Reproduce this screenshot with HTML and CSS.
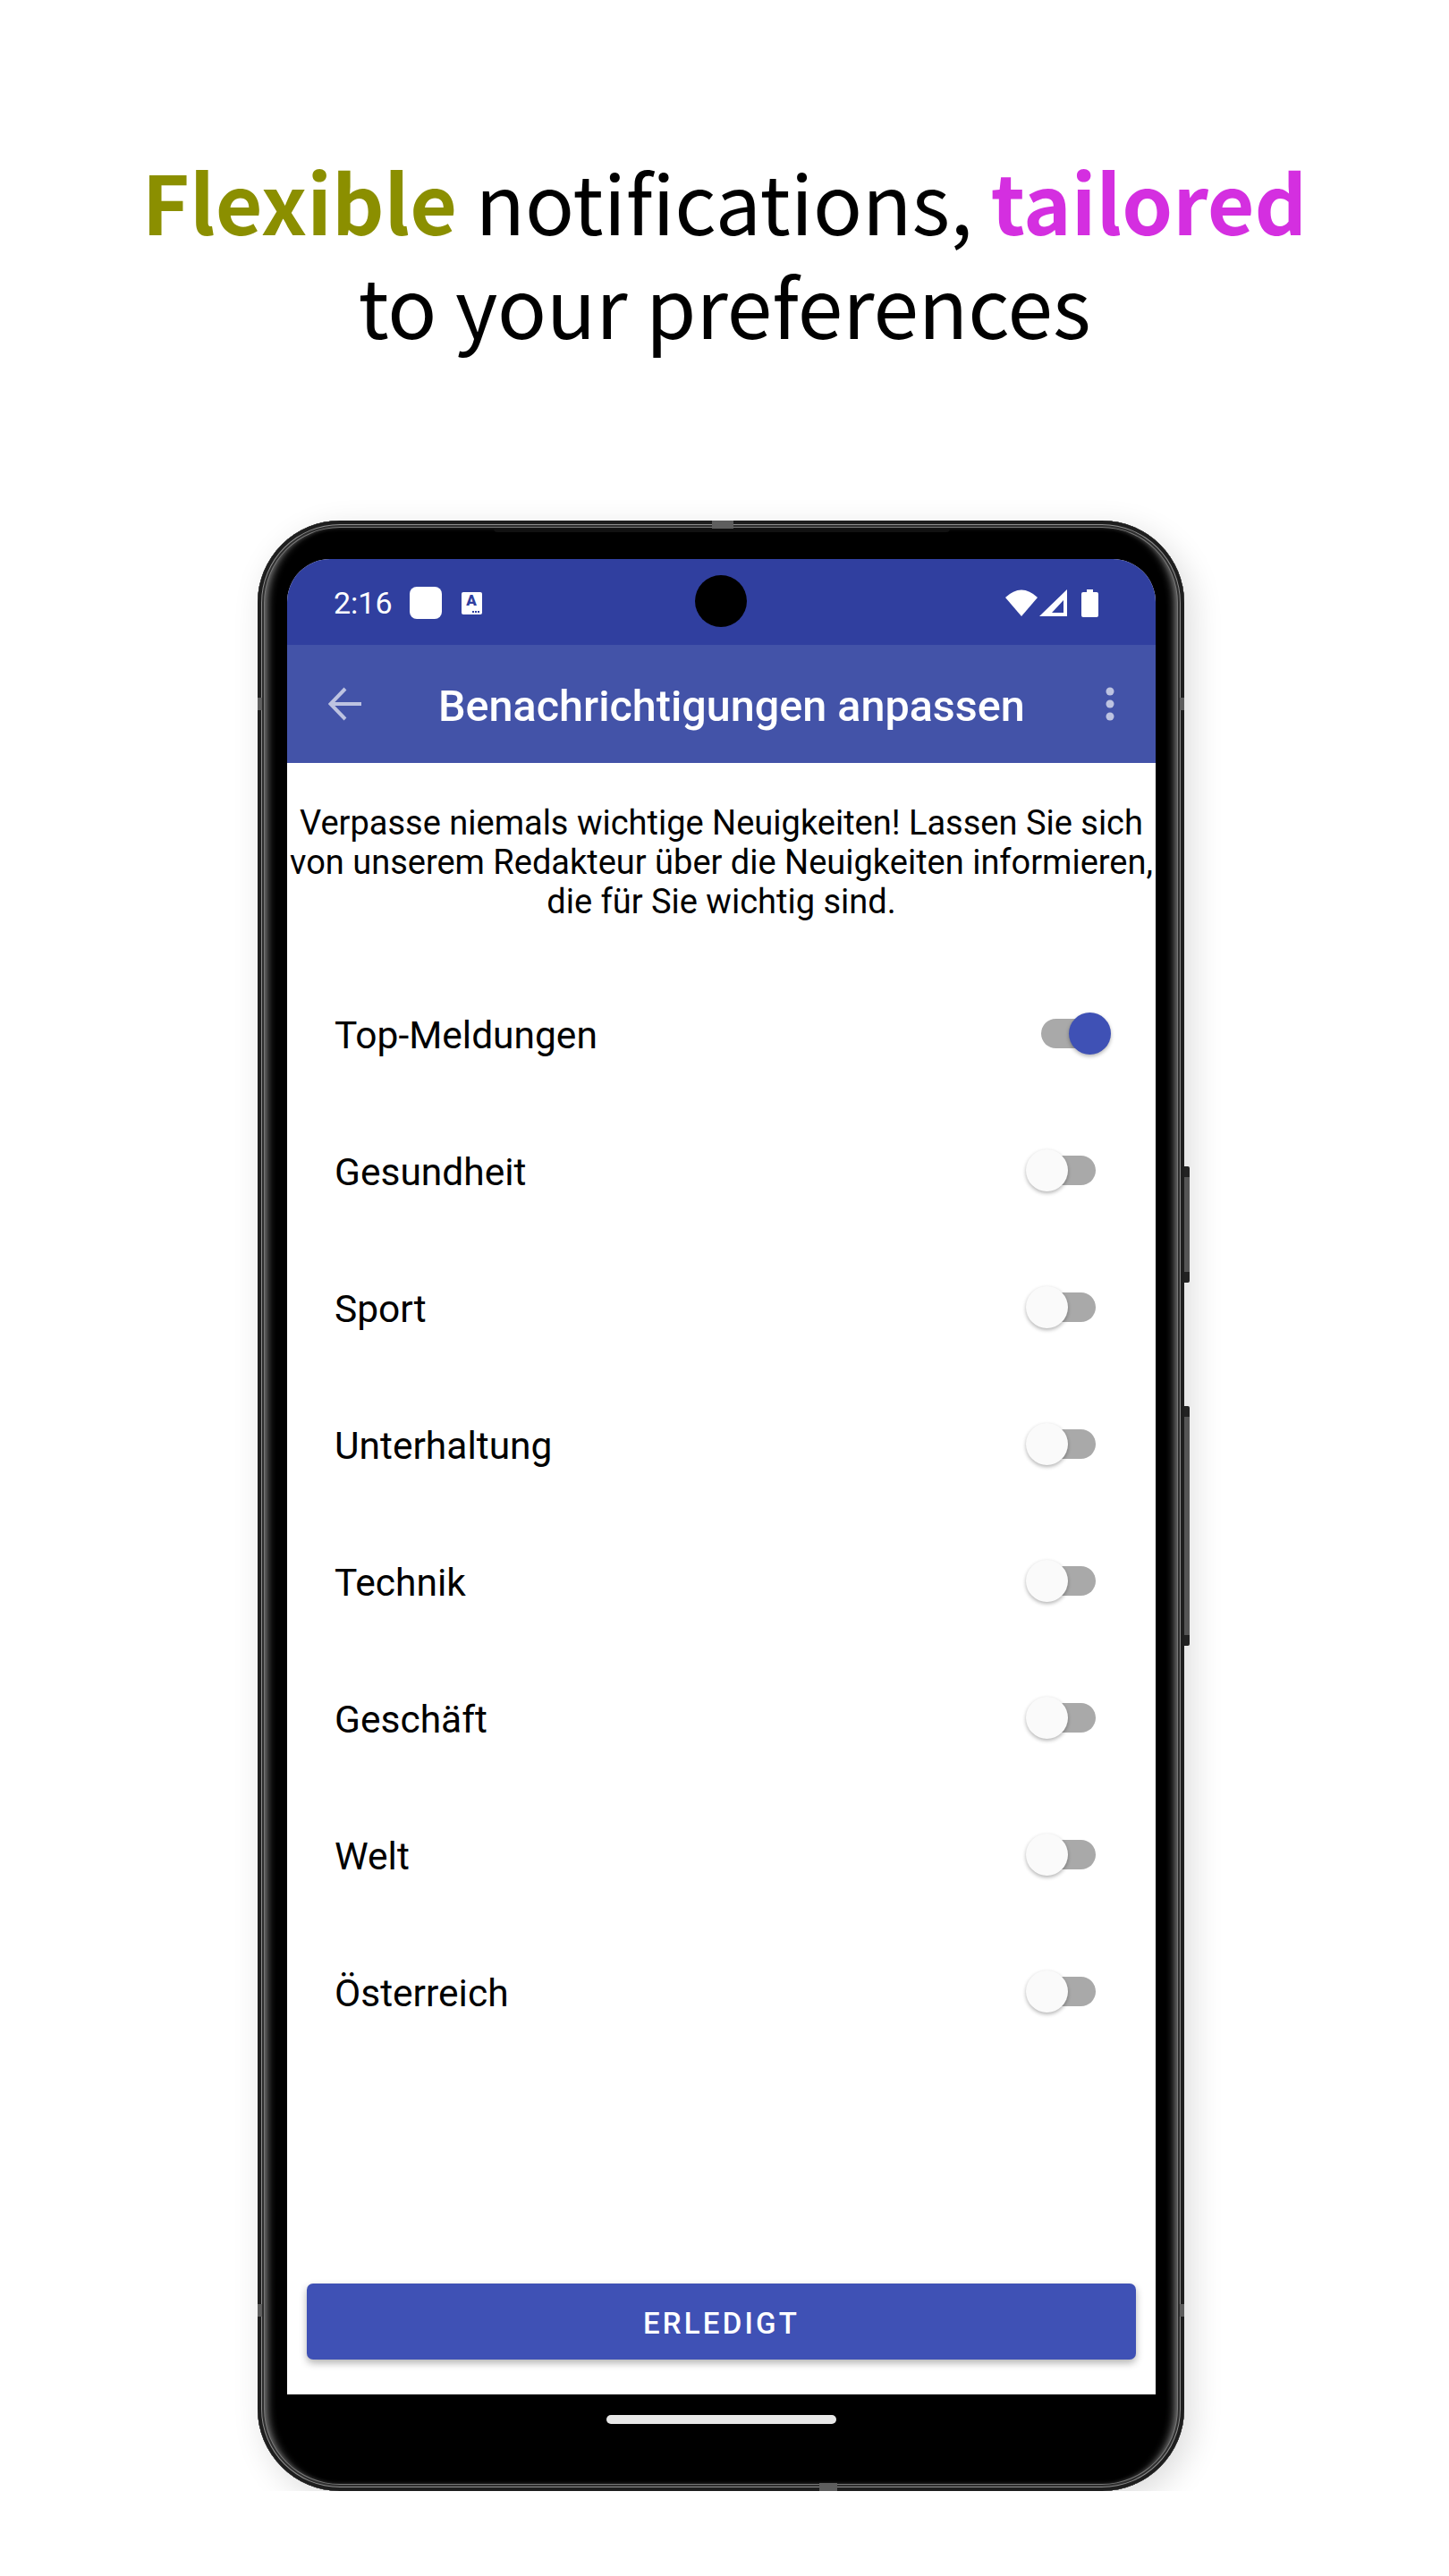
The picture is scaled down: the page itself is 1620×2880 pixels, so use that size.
FILE: index.html
```html
<!DOCTYPE html>
<html lang="en">
<head>
    <meta charset="UTF-8">
    <title>Benachrichtigungen</title>
    <link rel="stylesheet" href="styles.css">
</head>
<body>
    <h1 class="headline">
        <strong class="olive">Flexible</strong> notifications, <strong class="pink">tailored</strong><br>
        to your preferences
    </h1>

    <div class="phone">
        <span class="side-key volume"></span>
        <span class="side-key power"></span>
        <span class="tick tick-top"></span>
        <span class="tick tick-bottom"></span>
        <span class="tick tick-left upper"></span>
        <span class="tick tick-left lower"></span>
        <span class="tick tick-right upper"></span>
        <span class="tick tick-right lower"></span>
        <span class="earpiece"></span>
        <span class="camera"></span>

        <div class="screen">
            <div class="status-bar">
                <span class="clock">2:16</span>
                <span class="app-square"></span>
                <span class="app-badge">A</span>
                <span class="status-icons">
                    <svg width="36" height="30" viewBox="0 0 36 30"><path d="M0 9Q18-8 36 9L18 30Z" fill="#fff"/></svg>
                    <svg width="31" height="30" viewBox="0 0 31 30"><path fill-rule="evenodd" d="M31 0V30H0ZM27 12 14 26H27Z" fill="#fff"/></svg>
                    <svg class="battery" width="19" height="31" viewBox="0 0 19 31"><path d="M6 0H13V3H17Q19 3 19 5V29Q19 31 17 31H2Q0 31 0 29V5Q0 3 2 3H6Z" fill="#fff"/></svg>
                </span>
            </div>

            <div class="app-bar">
                <svg class="back" width="38" height="38" viewBox="0 0 38 38"><path d="M37 19H3M19 2 2.500 19 19 36" fill="none" stroke="#fff" stroke-opacity=".65" stroke-width="4"/></svg>
                <div class="app-title">Benachrichtigungen anpassen</div>
                <svg class="more" width="10" height="38" viewBox="0 0 10 38"><g fill="#fff" fill-opacity=".65"><circle cx="5" cy="5" r="4.500"/><circle cx="5" cy="19" r="4.500"/><circle cx="5" cy="33" r="4.500"/></g></svg>
            </div>

            <div class="content">
                <p class="intro">Verpasse niemals wichtige Neuigkeiten! Lassen Sie sich<br>von unserem Redakteur über die Neuigkeiten informieren,<br>die für Sie wichtig sind.</p>

                <div class="topics">
                    <div class="topic"><span class="topic-name">Top-Meldungen</span><span class="switch on"></span></div>
                    <div class="topic"><span class="topic-name">Gesundheit</span><span class="switch"></span></div>
                    <div class="topic"><span class="topic-name">Sport</span><span class="switch"></span></div>
                    <div class="topic"><span class="topic-name">Unterhaltung</span><span class="switch"></span></div>
                    <div class="topic"><span class="topic-name">Technik</span><span class="switch"></span></div>
                    <div class="topic"><span class="topic-name">Geschäft</span><span class="switch"></span></div>
                    <div class="topic"><span class="topic-name">Welt</span><span class="switch"></span></div>
                    <div class="topic"><span class="topic-name">Österreich</span><span class="switch"></span></div>
                </div>

                <button class="done" type="button">ERLEDIGT</button>
            </div>
        </div>

        <div class="nav-area">
            <span class="home-bar"></span>
        </div>
    </div>
</body>
</html>
```

FILE: styles.css
```css
body {
    margin: 0;
    background-color: #fff;
    font-family: Roboto, sans-serif;
    color: #000;
}
.headline {
    margin: 0;
    padding-top: 165px;
    text-align: center;
    font-family: "Noto Sans CJK SC", "Noto Sans", sans-serif;
    font-size: 91px;
    font-weight: 400;
    line-height: 116px;
}
.headline strong {
    font-weight: 700;
}
.olive {
    color: #8b8f00;
}
.pink {
    color: #d42fe0;
}
.phone {
    position: relative;
    width: 1036px;
    height: 2203px;
    box-sizing: border-box;
    margin: 185px 0 0 288px;
    padding: 43px 32px 0 33px;
    display: flex;
    flex-direction: column;
    background-color: #000;
    border-radius: 92px;
    box-shadow:
        inset 0 0 0 4px #1e1e1e,
        inset 0 0 0 5px #8c8c8c,
        inset 0 0 0 7px #2e2e2e,
        inset 0 0 0 8px #777,
        inset 14px 0 10px -3px #777,
        inset -14px 0 10px -3px #777,
        inset 0 0 5px 8px #333,
        8px 10px 36px rgba(0, 0, 0, .14);
}
.side-key {
    position: absolute;
    right: -6px;
    width: 6px;
    background: linear-gradient(#222 0 12px, #555 12px calc(100% - 12px), #222 calc(100% - 12px));
    border-radius: 0 2px 2px 0;
}
.volume {
    top: 722px;
    height: 130px;
}
.power {
    top: 990px;
    height: 268px;
}
.tick {
    position: absolute;
    background-color: #5e5e5e;
}
.tick-top {
    top: 0;
    left: 508px;
    width: 24px;
    height: 10px;
}
.tick-bottom {
    bottom: 0;
    left: 628px;
    width: 20px;
    height: 9px;
}
.tick-left,
.tick-right {
    width: 5px;
    height: 14px;
}
.tick-left {
    left: 0;
}
.tick-right {
    right: 0;
}
.upper {
    top: 198px;
}
.lower {
    bottom: 195px;
}
.earpiece {
    position: absolute;
    top: 9px;
    left: 264px;
    width: 510px;
    height: 4px;
    background-color: #111;
    border-radius: 0 0 6px 6px;
}
.camera {
    position: absolute;
    top: 61px;
    left: 489px;
    width: 58px;
    height: 58px;
    border-radius: 50%;
    background-color: #000;
}
.screen {
    flex: 1;
    display: flex;
    flex-direction: column;
    background-color: #fff;
    border-radius: 48px 48px 0 0;
    overflow: hidden;
}
.status-bar {
    height: 96px;
    box-sizing: border-box;
    padding: 2px 64px 0 52px;
    display: flex;
    align-items: center;
    background-color: #303f9f;
    color: #fff;
}
.clock {
    font-size: 34px;
    margin-right: 19px;
}
.app-square {
    width: 36px;
    height: 36px;
    background-color: #fff;
    border-radius: 8px;
    margin-right: 22px;
}
.app-badge {
    position: relative;
    width: 23px;
    height: 25px;
    background-color: #fff;
    color: #303f9f;
    border-radius: 2px;
    font-size: 17px;
    font-weight: 900;
    line-height: 19px;
    text-align: center;
}
.app-badge::after {
    content: "";
    position: absolute;
    left: 12px;
    bottom: 2px;
    width: 2px;
    height: 2px;
    background-color: #303f9f;
    box-shadow: 3px 0 #303f9f, 6px 0 #303f9f;
}
.status-icons {
    margin-left: auto;
    display: flex;
    align-items: center;
    gap: 2px;
}
.battery {
    margin-left: 14px;
}
.app-bar {
    height: 132px;
    box-sizing: border-box;
    padding: 0 46px;
    display: flex;
    align-items: center;
    background-color: #4353a8;
    color: #fff;
}
.app-title {
    flex: 1;
    padding: 4px 0 0 85px;
    font-size: 48.500px;
    font-weight: 500;
    white-space: nowrap;
}
.content {
    flex: 1;
    display: flex;
    flex-direction: column;
}
.intro {
    margin: 45px 0 0;
    text-align: center;
    font-size: 38px;
    line-height: 44px;
    white-space: nowrap;
}
.topics {
    margin-top: 49px;
    flex: 1;
}
.topic {
    height: 153px;
    padding-left: 53px;
    display: flex;
    align-items: center;
    justify-content: space-between;
    font-size: 42.500px;
}
.topic-name {
    padding-top: 3px;
}
.switch {
    position: relative;
    width: 67px;
    height: 33px;
    margin-right: 67px;
    background-color: #a9a9a9;
    border-radius: 17px;
}
.switch::after {
    content: "";
    position: absolute;
    top: -7px;
    left: -11px;
    width: 47px;
    height: 47px;
    border-radius: 50%;
    background-color: #fafafa;
    box-shadow: 0 2px 4px rgba(0, 0, 0, .3);
}
.switch.on {
    margin-right: 61px;
}
.switch.on::after {
    left: 31px;
    background-color: #3f51b5;
}
.done {
    height: 85px;
    margin: 0 22px 39px;
    padding-top: 4px;
    border: none;
    border-radius: 7px;
    background-color: #3f51b5;
    color: #fff;
    font-family: Roboto, sans-serif;
    font-size: 33px;
    font-weight: 500;
    letter-spacing: 3.200px;
    box-shadow: 0 4px 8px rgba(0, 0, 0, .3);
}
.nav-area {
    height: 108px;
    display: flex;
    justify-content: center;
    padding-top: 23px;
    box-sizing: border-box;
}
.home-bar {
    width: 257px;
    height: 10px;
    border-radius: 5px;
    background-color: #e8e8e8;
}
```
